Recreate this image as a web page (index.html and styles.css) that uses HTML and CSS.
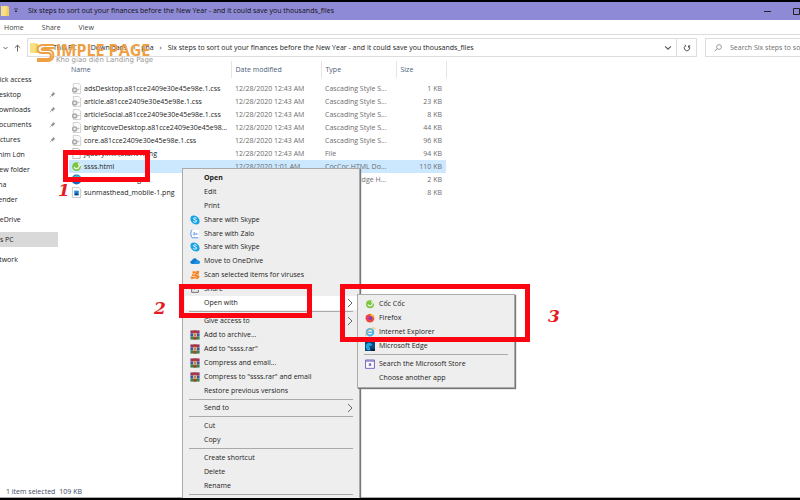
FILE: index.html
```html
<!DOCTYPE html>
<html lang="en">
<head>
<meta charset="utf-8">
<title>File Explorer</title>
<link rel="stylesheet" href="styles.css">
</head>
<body>
<svg class="defs" aria-hidden="true">
  <symbol id="folder" viewBox="0 0 10 12"><path d="M1 1h6l2 1v9H1z" fill="#f9df84"/><path d="M7 2h2v9H6z" fill="#f2cf5c"/></symbol>
  <symbol id="css" viewBox="0 0 12 12"><path d="M2.500.5h6l2 2v9h-8z" fill="#fafafa" stroke="#b9b9b9" stroke-width=".7"/><circle cx="4" cy="7.500" r="3" fill="#aaa"/><circle cx="4" cy="7.500" r="1.300" fill="#eee"/><path d="M7 7h2" stroke="#aaa"/></symbol>
  <symbol id="page" viewBox="0 0 12 12"><path d="M2 .5h6l2 2v9H2z" fill="#fff" stroke="#999" stroke-width=".7"/></symbol>
  <symbol id="png" viewBox="0 0 12 12"><path d="M1.500.5h7l2 2v9h-9z" fill="#fff" stroke="#aaa" stroke-width=".7"/><path d="M3.500 4h5v5h-5z" fill="#2488d8"/><path d="M3.500 9l2.500-3 2.500 3z" fill="#123a70"/></symbol>
  <symbol id="coc" viewBox="0 0 12 12"><circle cx="6" cy="6.200" r="4.800" fill="#7cc644"/><path d="M3.500 6.500a2.600 2.600 0 0 0 5 0L11 3" fill="none" stroke="#e9f7df" stroke-width="1.500"/><circle cx="8.500" cy="3.500" r="1" fill="#fff"/></symbol>
  <symbol id="edge" viewBox="0 0 12 12"><circle cx="6" cy="6" r="5.500" fill="#1469b8"/><path d="M1 5c2-5 9-5 10 0 .5 3-3 3-4 2 1-3-4-4-6-2z" fill="#35c1cf"/></symbol>
  <symbol id="skype" viewBox="0 0 12 12"><circle cx="4.500" cy="4.500" r="4" fill="#18a3e6"/><circle cx="7.500" cy="7.500" r="4" fill="#18a3e6"/><circle cx="6" cy="6" r="4.600" fill="#18a3e6"/><path d="M8 4C6.500 2.800 4 3.300 4.200 4.700 4.400 6.200 8 5.600 8 7.300 8 8.900 5 9 4 7.800" fill="none" stroke="#fff" stroke-width="1.200"/></symbol>
  <symbol id="zalo" viewBox="0 0 12 12"><path d="M1 1h10v10H1z" fill="#fff"/><path d="M2.500.8C.5 3 .5 8 2.500 10.500H10" fill="none" stroke="#3b7fd9" stroke-width="1"/><path d="M4 4.500h2L4 7h2M7 5v2m1-2v2m1.500-1.500v1" fill="none" stroke="#3b7fd9" stroke-width=".8"/></symbol>
  <symbol id="cloud" viewBox="0 0 12 12"><path d="M2.500 9.500C-.5 9-.2 5.500 2.500 5.500 3.500 2 7.500 2 8.500 5c4 0 4.300 4.500 1 4.500z" fill="#1478cf"/><path d="M3 9.500 8.500 5c4 0 4.300 4.500 1 4.500z" fill="#1c91e6"/></symbol>
  <symbol id="avast" viewBox="0 0 12 12"><path d="M3.500.8 6 2l3.500-1.200 1.700 1L10 5l1.500 3.500L9 11 6 9.800 2 11 .5 9 2.300 6.500z" fill="#f58220"/><path d="M2 3.500 5 5.500l2-2.500M1.500 8 5 7.500 7.500 9M8 5.500l2 1" fill="none" stroke="#fff" stroke-width=".8"/></symbol>
  <symbol id="share" viewBox="0 0 12 12"><path d="M4 3H2v7h8V7M5 7c0-3 2-3.500 5-3.500M8 1.500l2.500 2L8 5.500" fill="none" stroke="#555" stroke-width="1"/></symbol>
  <symbol id="rar" viewBox="0 0 12 12"><path d="M.5.5h11v3.600H.5z" fill="#9c3160"/><path d="M.5 4.200h11v3.600H.5z" fill="#3357a8"/><path d="M.5 7.900h11v3.600H.5z" fill="#388446"/><path d="M4.300.5h3.400v11H4.300z" fill="#b3402c"/><path d="M3.800 4h4.400v4H3.800z" fill="#f3d79a"/><path d="M5 5h2v2H5z" fill="#a34a2a"/></symbol>
  <symbol id="firefox" viewBox="0 0 12 12"><circle cx="6" cy="6.300" r="5.200" fill="#f0502d"/><path d="M7 .5c3 1.500 4.500 4 4 7C10 4 8 4 6.500 4z" fill="#fdbd2c"/><circle cx="6" cy="6.200" r="2.700" fill="#7b3fc4"/><path d="M1 3l2.500.5L6 4.500 4.500 6C4 8 6 9 8.500 7.500 7 11 2 10.500 1 7z" fill="#f43b52"/></symbol>
  <symbol id="ie" viewBox="0 0 12 12"><circle cx="6" cy="6.200" r="4" fill="none" stroke="#4bb4e8" stroke-width="2.200"/><path d="M3 6.300h7" stroke="#4bb4e8" stroke-width="1.600"/><path d="M1 11C-.5 8 6 1 11 1c1 .5.500 2 0 2.500" fill="none" stroke="#e5bd35" stroke-width="1"/></symbol>
  <symbol id="edgetile" viewBox="0 0 12 12"><path d="M0 0h12v12H0z" fill="#0b457f"/><path d="M1 5c1-4 7-4 8 0L5 6l2 5H3C1 9 1 7 1 5z" fill="#23a5df"/><path d="M6 7c1 3 3 3 6 2v3H7z" fill="#061f3f"/></symbol>
  <symbol id="store" viewBox="0 0 12 12"><path d="M.7 1.200h10.600v10H.7z" fill="#fff" stroke="#7567bd" stroke-width="1.200"/><path d="M1 2.500h10" stroke="#7567bd" stroke-width="1.300"/><path d="M4.500 5h3v3.500h-3z" fill="#8779c9"/></symbol>
  <symbol id="pin" viewBox="0 0 8 8"><path d="M4.300.8l3 2.700-1 .2-1.500 1.500-.2 1.300L2 4l1.200-.3 1.200-1.500z" fill="#87909a"/><path d="M3 5 .8 7.200" stroke="#87909a" stroke-width=".8"/></symbol>
  <symbol id="chev" viewBox="0 0 6 10"><path d="M1 1l4 4-4 4" fill="none" stroke="#666" stroke-width="1"/></symbol>
</svg>

<div class="window">
  <header class="titlebar">
    <svg class="title-folder"><use href="#folder"/></svg>
    <svg class="quick" viewBox="0 0 6 6"><path d="M1 1h4M2 3h2L3 4z" stroke="#222" stroke-width=".7" fill="#222"/></svg>
    <h1>Six steps to sort out your finances before the New Year - and it could save you thousands_files</h1>
    <div class="controls">
      <button aria-label="Minimize"><svg viewBox="0 0 7 7"><path d="M0 3.500h7" stroke="#222"/></svg></button>
      <button aria-label="Maximize"><svg viewBox="0 0 7 7"><path d="M.5.5h6v6h-6z" fill="none" stroke="#222"/></svg></button>
    </div>
  </header>
  <nav class="ribbon"><a href="#home">Home</a><a href="#share-tab">Share</a><a href="#view">View</a></nav>
  <div class="addressbar">
    <div class="history">
      <button aria-label="Recent locations"><svg viewBox="0 0 7 7"><path d="M1.500 2.500l2 2 2-2" fill="none" stroke="#555" stroke-width=".9"/></svg></button>
      <button aria-label="Up"><svg viewBox="0 0 7 7"><path d="M3.500 7V.8M.8 3.300 3.500.7l2.700 2.600" fill="none" stroke="#555" stroke-width=".9"/></svg></button>
    </div>
    <div class="path">
      <svg class="path-folder"><use href="#folder"/></svg>
      <span class="sep">›</span><a href="#pc">This PC</a><span class="sep">›</span><a href="#downloads">Downloads</a><span class="sep">›</span><a href="#pha">pha</a><span class="sep">›</span><a href="#files">Six steps to sort out your finances before the New Year - and it could save you thousands_files</a>
      <button class="drop" aria-label="Previous locations"><svg viewBox="0 0 7 7"><path d="M1 2l2.500 2.500L6 2" fill="none" stroke="#555" stroke-width="1"/></svg></button>
    </div>
    <button class="refresh" aria-label="Refresh"><svg viewBox="0 0 8 8"><path d="M2.500 1.800a2.700 2.700 0 1 0 3.200.2M2 .8l.8 1.500M5.500 3.600V1.800h1.800" fill="none" stroke="#444" stroke-width=".9"/></svg></button>
    <label class="search"><svg viewBox="0 0 8 8"><circle cx="5" cy="3" r="2.400" fill="none" stroke="#777" stroke-width=".7"/><path d="M3.200 4.700.7 7.300" stroke="#777" stroke-width=".8"/></svg><input type="text" aria-label="Search" placeholder="Search Six steps to sort out your finances"></label>
  </div>

  <div class="body">
    <nav class="tree">
      <ul>
        <li><a href="#quick">Quick access</a></li>
        <li class="sub"><a href="#d">Desktop</a><svg><use href="#pin"/></svg></li>
        <li class="sub"><a href="#dl">Downloads</a><svg><use href="#pin"/></svg></li>
        <li class="sub"><a href="#doc">Documents</a><svg><use href="#pin"/></svg></li>
        <li class="sub"><a href="#pic">Pictures</a><svg><use href="#pin"/></svg></li>
        <li class="sub"><a href="#film">Phim Lớn</a></li>
        <li class="sub"><a href="#new">New folder</a></li>
        <li class="sub"><a href="#p">pha</a></li>
        <li class="sub"><a href="#render">Render</a></li>
      </ul>
      <ul><li><a href="#onedrive">OneDrive</a></li></ul>
      <ul><li class="current"><a href="#thispc">This PC</a></li></ul>
      <ul><li><a href="#network">Network</a></li></ul>
    </nav>
    <main class="files">
      <table>
        <colgroup><col class="c-name"><col class="c-date"><col class="c-type"><col class="c-size"></colgroup>
        <thead><tr><th>Name</th><th>Date modified</th><th>Type</th><th>Size</th></tr></thead>
        <tbody>
          <tr><td><svg><use href="#css"/></svg>adsDesktop.a81cce2409e30e45e98e.1.css</td><td>12/28/2020 12:43 AM</td><td>Cascading Style S...</td><td>1 KB</td></tr>
          <tr><td><svg><use href="#css"/></svg>article.a81cce2409e30e45e98e.1.css</td><td>12/28/2020 12:43 AM</td><td>Cascading Style S...</td><td>23 KB</td></tr>
          <tr><td><svg><use href="#css"/></svg>articleSocial.a81cce2409e30e45e98e.1.css</td><td>12/28/2020 12:43 AM</td><td>Cascading Style S...</td><td>8 KB</td></tr>
          <tr><td><svg><use href="#css"/></svg>brightcoveDesktop.a81cce2409e30e45e98...</td><td>12/28/2020 12:43 AM</td><td>Cascading Style S...</td><td>44 KB</td></tr>
          <tr><td><svg><use href="#css"/></svg>core.a81cce2409e30e45e98e.1.css</td><td>12/28/2020 12:43 AM</td><td>Cascading Style S...</td><td>96 KB</td></tr>
          <tr><td><svg><use href="#page"/></svg>jquery.min,star.v1.png</td><td>12/28/2020 12:43 AM</td><td>File</td><td>94 KB</td></tr>
          <tr class="selected"><td><svg><use href="#coc"/></svg>ssss.html</td><td>12/28/2020 1:01 AM</td><td>CocCoc HTML Do...</td><td>110 KB</td></tr>
          <tr><td><svg><use href="#edge"/></svg>sunmasthead.svg</td><td>12/28/2020 12:43 AM</td><td>Microsoft Edge H...</td><td>2 KB</td></tr>
          <tr><td><svg><use href="#png"/></svg>sunmasthead_mobile-1.png</td><td>12/28/2020 12:43 AM</td><td>PNG File</td><td>8 KB</td></tr>
        </tbody>
      </table>
    </main>
  </div>
  <footer class="status"><span>1 item selected</span><span>109 KB</span></footer>

  <div class="menu context" role="menu">
    <button class="bold">Open</button>
    <button>Edit</button>
    <button>Print</button>
    <button><svg><use href="#skype"/></svg>Share with Skype</button>
    <button><svg><use href="#zalo"/></svg>Share with Zalo</button>
    <button><svg><use href="#skype"/></svg>Share with Skype</button>
    <button><svg><use href="#cloud"/></svg>Move to OneDrive</button>
    <button><svg><use href="#avast"/></svg>Scan selected items for viruses</button>
    <button><svg><use href="#share"/></svg>Share</button>
    <button class="open">Open with<svg class="arrow"><use href="#chev"/></svg></button>
    <hr>
    <button>Give access to<svg class="arrow"><use href="#chev"/></svg></button>
    <button><svg><use href="#rar"/></svg>Add to archive...</button>
    <button><svg><use href="#rar"/></svg>Add to "ssss.rar"</button>
    <button><svg><use href="#rar"/></svg>Compress and email...</button>
    <button><svg><use href="#rar"/></svg>Compress to "ssss.rar" and email</button>
    <button>Restore previous versions</button>
    <hr>
    <button>Send to<svg class="arrow"><use href="#chev"/></svg></button>
    <hr>
    <button>Cut</button>
    <button>Copy</button>
    <hr>
    <button>Create shortcut</button>
    <button>Delete</button>
    <button>Rename</button>
    <hr>
  </div>

  <div class="menu submenu" role="menu">
    <button><svg><use href="#coc"/></svg>Cốc Cốc</button>
    <button><svg><use href="#firefox"/></svg>Firefox</button>
    <button><svg><use href="#ie"/></svg>Internet Explorer</button>
    <button><svg><use href="#edgetile"/></svg>Microsoft Edge</button>
    <hr>
    <button><svg><use href="#store"/></svg>Search the Microsoft Store</button>
    <button>Choose another app</button>
  </div>

  <div class="logo">
    <svg viewBox="0 0 19 20"><path d="M18 2H7C0 2 0 10 6 10h6c4 0 4 6 0 6H1M18 5H8c-3 0-3 2-1 2h6c6 0 6 11-1 11H1" fill="none" stroke="#f0a044" stroke-width="2"/></svg>
    <div><strong>IMPLE PAGE</strong><small>Kho giao diện Landing Page</small></div>
  </div>

  <div class="mark mark-file"></div>
  <div class="mark mark-open"></div>
  <div class="mark mark-apps"></div>
  <b class="step step-1">1</b>
  <b class="step step-2">2</b>
  <b class="step step-3">3</b>
</div>
</body>
</html>
```
FILE: styles.css
```css
* { box-sizing: border-box; }
body {
  margin: 0;
  font: 7px/14px "Open Sans", "Noto Sans", sans-serif;
  color: #222;
  background: #fff;
}
a { color: inherit; text-decoration: none; }
button { font: inherit; color: inherit; border: 0; padding: 0; background: none; }
svg { display: block; flex: none; }
.defs { position: absolute; width: 0; height: 0; }

.window {
  position: relative;
  display: flex;
  flex-direction: column;
  min-height: 100vh;
  overflow: hidden;
  white-space: nowrap;
  border-top: 2px solid #000;
  border-bottom: 2px solid #000;
}

.titlebar {
  display: flex;
  align-items: center;
  height: 18px;
  background: #8e8ad6;
}
.title-folder { width: 10px; height: 12px; }
.quick { width: 6px; height: 6px; margin: 0 9px 0 3px; }
.titlebar h1 { margin: 0; font: inherit; color: #111; }
.controls { display: flex; gap: 22px; margin-left: auto; }
.controls svg { width: 7px; height: 7px; }

.ribbon {
  display: flex;
  gap: 18px;
  height: 15px;
  padding: 1px 4px 0;
  border-bottom: 1px solid #ddd;
  color: #444;
}

.addressbar { display: flex; height: 19px; margin-top: 3px; }
.history { display: flex; align-items: center; gap: 5px; width: 27px; padding-left: 2px; }
.history svg { width: 7px; height: 8px; }
.path {
  display: flex;
  align-items: center;
  flex: 1;
  border: 1px solid #ddd;
  padding: 0 4px 0 1px;
}
.path-folder { width: 10px; height: 12px; }
.sep { width: 14px; text-align: center; }
.drop { margin-left: auto; }
.drop svg { width: 8px; height: 8px; }
.refresh {
  display: flex;
  align-items: center;
  justify-content: center;
  width: 20px;
  border: 1px solid #ddd;
  border-left: 0;
}
.refresh svg { width: 8px; height: 8px; }
.search {
  display: flex;
  align-items: center;
  gap: 8px;
  width: 95px;
  margin-left: 8px;
  padding-left: 8px;
  border: 1px solid #ddd;
  border-right: 0;
}
.search svg { width: 8px; height: 8px; }
.search input { flex: 1; min-width: 0; border: 0; padding: 0; font: inherit; outline: 0; }
.search input::placeholder { color: #6d6d6d; opacity: 1; }

.body { display: flex; flex: 1; padding-top: 4px; }
.tree { width: 58px; padding-top: 11px; overflow: hidden; }
.tree ul { margin: 0 0 5px -10px; padding: 0; list-style: none; }
.tree li { display: flex; align-items: center; height: 15px; }
.tree .sub { padding: 0 2px 0 4px; }
.tree li svg { width: 7px; height: 7px; margin-left: auto; }
.tree .current { background: #d9d9d9; }

.files { flex: 1; padding-left: 11px; }
table { width: 377px; border-collapse: collapse; table-layout: fixed; }
.c-name { width: 162px; }
.c-date { width: 90px; }
.c-type { width: 75px; }
.c-size { width: 50px; }
th {
  height: 17px;
  padding: 0 0 0 4px;
  border-right: 1px solid #e5e5e5;
  font-weight: 400;
  text-align: left;
  color: #4c607a;
}
th:first-child, td:first-child { padding-left: 2px; }
tbody::before { content: ""; display: block; height: 4px; }
td { height: 13px; padding: 0 0 0 4px; line-height: 13px; color: #6d6d6d; overflow: hidden; }
td:first-child { color: #222; }
td:last-child { text-align: right; padding-right: 4px; }
td svg { float: left; width: 11px; height: 11px; margin: 1px 2px 0 0; }
.selected { background: #cce8ff; }

.status { display: flex; gap: 4px; height: 12px; padding-left: 6px; color: #3c4a66; line-height: 12px; border-bottom: 1px solid #aaa; }

.menu {
  position: absolute;
  display: flex;
  flex-direction: column;
  padding: 2px;
  background: #eee;
  border: 1px solid #aaa;
  box-shadow: 1px 1px 1px #777;
}
.menu button {
  position: relative;
  display: flex;
  align-items: center;
  flex: 0 1 14px;
  min-height: 0;
  padding-left: 19px;
  text-align: left;
}
.menu button svg { position: absolute; left: 5px; width: 10px; height: 10px; }
.menu button .arrow { left: auto; right: 4px; width: 6px; height: 10px; }
.menu hr { flex: none; width: auto; height: 1px; margin: 1px 4px 2px; border: 0; background: #aaa; }
.menu .bold { font-weight: 700; }
.menu .open { background: #fff; }
.context { top: 166px; bottom: 0; left: 182px; width: 178px; border-bottom: 0; padding-bottom: 1px; }
.submenu { top: 292px; left: 357px; width: 158px; }

.logo { position: absolute; top: 41px; left: 36px; display: flex; gap: 1px; color: #f0a044; }
.logo svg { width: 19px; height: 20px; }
.logo div { display: flex; flex-direction: column; }
.logo strong { font: 700 16px/14px "Open Sans", sans-serif; }
.logo small { font: 7px/7px "DejaVu Sans", sans-serif; color: #999; }

.mark { position: absolute; border: 5px solid #fb0512; }
.mark-file { top: 148px; left: 63px; width: 87px; height: 32px; }
.mark-open { top: 282px; left: 179px; width: 133px; height: 34px; }
.mark-apps { top: 282px; left: 340px; width: 190px; height: 58px; }
.step { position: absolute; font: italic 700 17px/20px "DejaVu Serif", serif; color: #e51c23; }
.step-1 { top: 178px; left: 58px; }
.step-2 { top: 296px; left: 154px; }
.step-3 { top: 304px; left: 548px; }
```
